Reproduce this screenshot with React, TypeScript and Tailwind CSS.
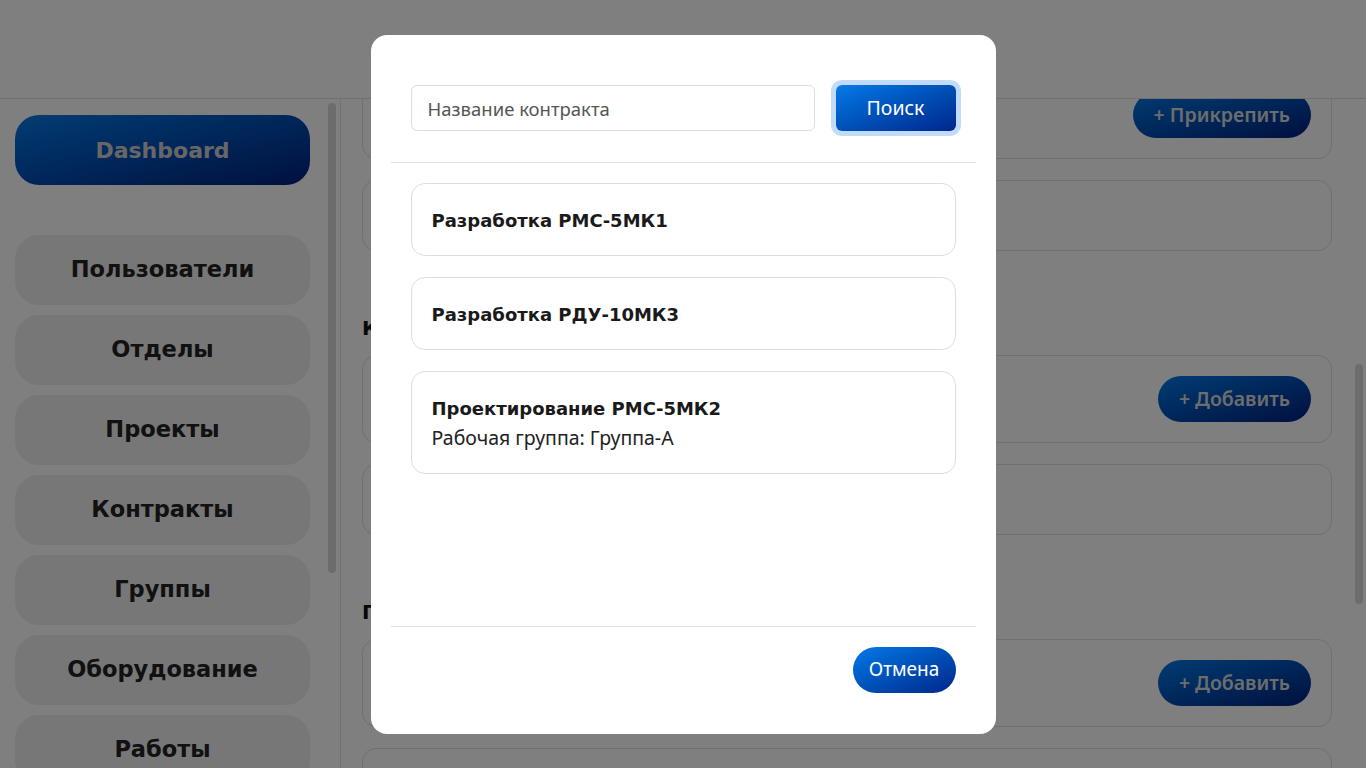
import React from "react";

const navItems = ["Пользователи", "Отделы", "Проекты", "Контракты", "Группы", "Оборудование", "Работы"];

function Card({ h, button }: { h: string; button?: string }) {
  return (
    <div className={`${h} shrink-0 rounded-[14px] border border-[#e0e0e0] flex items-center justify-end px-[20px]`}>
      {button && (
        <button className="h-[46px] px-[21px] rounded-full bg-gradient-to-br from-[#0a7ae8] to-[#00207f] text-[#dadada] text-[19.5px] font-semibold font-['Noto_Sans',sans-serif]">
          {button}
        </button>
      )}
    </div>
  );
}

export default function App() {
  return (
    <div className="relative w-[1366px] h-[768px] overflow-hidden bg-white font-['Noto_Sans',sans-serif]">
      <header className="h-[99px] border-b border-[#e0e0e0] bg-white" />
      <div className="flex h-[669px]">
        <aside className="relative w-[341px] shrink-0 overflow-hidden border-r border-[#e2e2e2] pl-[15px] pr-[30px] pt-[16px] flex flex-col">
          <div className="h-[70px] shrink-0 rounded-[24px] bg-gradient-to-br from-[#0a7ae8] to-[#00207f] flex items-center justify-center text-[#cfcfcf] text-[22px] font-bold font-['DejaVu_Sans',sans-serif]">
            Dashboard
          </div>
          <div className="mt-[50px] flex flex-col gap-[10px] shrink-0">
            {navItems.map((n) => (
              <div
                key={n}
                className="h-[70px] shrink-0 rounded-[24px] bg-[#eeeeee] flex items-center justify-center text-[#222] text-[22.5px] font-bold font-['DejaVu_Sans',sans-serif]"
              >
                {n}
              </div>
            ))}
          </div>
          <div className="absolute left-[328px] top-[4px] w-[8px] h-[470px] rounded-full bg-[#d8d8d8]" />
        </aside>
        <main className="relative flex-1 overflow-hidden pl-[21px] pr-[34px]">
          <div className="-mt-[28px] flex flex-col">
            <Card h="h-[88px]" button="+ Прикрепить" />
            <div className="mt-[21px]"><Card h="h-[71px]" /></div>
            <h2 className="mt-[62px] mb-[12px] leading-[30px] text-[20px] font-bold text-[#111] font-['DejaVu_Sans',sans-serif]">Контракты</h2>
            <Card h="h-[88px]" button="+ Добавить" />
            <div className="mt-[21px]"><Card h="h-[71px]" /></div>
            <h2 className="mt-[62px] mb-[12px] leading-[30px] text-[20px] font-bold text-[#111] font-['DejaVu_Sans',sans-serif]">Проекты</h2>
            <Card h="h-[88px]" button="+ Добавить" />
            <div className="mt-[21px]"><Card h="h-[71px]" /></div>
          </div>
          <div className="absolute right-[3px] top-[265px] w-[8px] h-[240px] rounded-full bg-[#dadada]" />
        </main>
      </div>

      <div className="absolute inset-0 bg-black/50 flex items-center justify-center">
        <div className="w-[625px] h-[699px] bg-white rounded-[16px] p-[20px] flex flex-col">
          <div className="pt-[30px] pb-[31px] px-[20px] border-b border-[#e0e0e0] flex items-center gap-[21px]">
            <div className="flex-1 h-[46px] rounded-[6px] border border-[#dedede] flex items-center px-[16px] pt-[3px] text-[18.5px] text-[#555]">
              Название контракта
            </div>
            <button className="w-[120px] h-[46px] rounded-[6px] bg-gradient-to-br from-[#0a7ae8] to-[#00268a] ring-[5px] ring-[#c3dbfb] text-white text-[19.5px]">
              Поиск
            </button>
          </div>
          <div className="flex-1 px-[20px] pt-[20px] flex flex-col gap-[21px] border-b border-[#e0e0e0]">
            <div className="rounded-[14px] border border-[#dedede] px-[20px] py-[20px]">
              <div className="leading-[29px] pt-[2px] text-[18px] font-bold text-[#1a1a1a] font-['DejaVu_Sans',sans-serif]">Разработка РМС-5МК1</div>
            </div>
            <div className="rounded-[14px] border border-[#dedede] px-[20px] py-[20px]">
              <div className="leading-[29px] pt-[2px] text-[18px] font-bold text-[#1a1a1a] font-['DejaVu_Sans',sans-serif]">Разработка РДУ-10МК3</div>
            </div>
            <div className="rounded-[14px] border border-[#dedede] px-[20px] pt-[20px] pb-[20px]">
              <div className="leading-[29px] pt-[2px] text-[18px] font-bold text-[#1a1a1a] font-['DejaVu_Sans',sans-serif]">Проектирование РМС-5МК2</div>
              <div className="leading-[30px] text-[19.5px] text-[#222]">Рабочая группа: Группа-А</div>
            </div>
          </div>
          <div className="pt-[20px] pb-[21px] px-[20px] flex justify-end">
            <button className="w-[103px] h-[46px] rounded-full bg-gradient-to-br from-[#0a7ae8] to-[#00268a] text-white text-[19px]">
              Отмена
            </button>
          </div>
        </div>
      </div>
    </div>
  );
}
